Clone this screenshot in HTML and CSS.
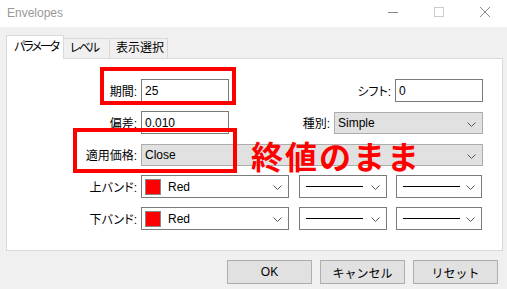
FILE: index.html
```html
<!DOCTYPE html>
<html lang="ja">
<head>
    <meta charset="UTF-8">
    <title>Envelopes</title>
    <link rel="stylesheet" href="styles.css">
</head>
<body>
    <div class="window">
        <div class="titlebar">
            <span class="title">Envelopes</span>
            <div class="controls">
                <svg class="ctl" width="46" height="27" viewBox="0 0 46 27"><line x1="18" y1="12.5" x2="28" y2="12.5" stroke="#888" stroke-width="1"/></svg>
                <svg class="ctl" width="46" height="27" viewBox="0 0 46 27"><rect x="18.5" y="7.5" width="9" height="9" fill="none" stroke="#ccc" stroke-width="1"/></svg>
                <svg class="ctl" width="46" height="27" viewBox="0 0 46 27"><path d="M18 7 L28 17 M28 7 L18 17" stroke="#888" stroke-width="1"/></svg>
            </div>
        </div>

        <div class="tabs">
            <div class="tab active kana">パラメータ</div>
            <div class="tab tab-level kana">レベル</div>
            <div class="tab tab-view">表示選択</div>
        </div>

        <div class="panel">
            <div class="row">
                <label class="lbl">期間:</label>
                <div class="input w88">25</div>
                <label class="lbl right-lbl-1">シフト:</label>
                <div class="input w88">0</div>
            </div>
            <div class="row">
                <label class="lbl">偏差:</label>
                <div class="input w88">0.010</div>
                <label class="lbl right-lbl-2">種別:</label>
                <div class="combo gray w149">Simple<svg class="chev" width="9" height="5" viewBox="0 0 9 5"><polyline points="0.5,0.5 4.5,4.5 8.5,0.5" fill="none" stroke="#555"/></svg></div>
            </div>
            <div class="row">
                <label class="lbl">適用価格:</label>
                <div class="combo gray w342">Close<svg class="chev" width="9" height="5" viewBox="0 0 9 5"><polyline points="0.5,0.5 4.5,4.5 8.5,0.5" fill="none" stroke="#555"/></svg></div>
            </div>
            <div class="row">
                <label class="lbl">上バンド:</label>
                <div class="combo w148"><span class="swatch"></span>Red<svg class="chev" width="9" height="5" viewBox="0 0 9 5"><polyline points="0.5,0.5 4.5,4.5 8.5,0.5" fill="none" stroke="#555"/></svg></div>
                <div class="combo w88 gap10"><span class="line"></span><svg class="chev" width="9" height="5" viewBox="0 0 9 5"><polyline points="0.5,0.5 4.5,4.5 8.5,0.5" fill="none" stroke="#555"/></svg></div>
                <div class="combo w86 gap9"><span class="line"></span><svg class="chev" width="9" height="5" viewBox="0 0 9 5"><polyline points="0.5,0.5 4.5,4.5 8.5,0.5" fill="none" stroke="#555"/></svg></div>
            </div>
            <div class="row">
                <label class="lbl">下バンド:</label>
                <div class="combo w148"><span class="swatch"></span>Red<svg class="chev" width="9" height="5" viewBox="0 0 9 5"><polyline points="0.5,0.5 4.5,4.5 8.5,0.5" fill="none" stroke="#555"/></svg></div>
                <div class="combo w88 gap10"><span class="line"></span><svg class="chev" width="9" height="5" viewBox="0 0 9 5"><polyline points="0.5,0.5 4.5,4.5 8.5,0.5" fill="none" stroke="#555"/></svg></div>
                <div class="combo w86 gap9"><span class="line"></span><svg class="chev" width="9" height="5" viewBox="0 0 9 5"><polyline points="0.5,0.5 4.5,4.5 8.5,0.5" fill="none" stroke="#555"/></svg></div>
            </div>
        </div>

        <div class="buttons">
            <button class="btn">OK</button>
            <button class="btn">キャンセル</button>
            <button class="btn">リセット</button>
        </div>

        <!-- annotations drawn over the dialog -->
        <div class="mark mark-period"></div>
        <div class="mark mark-price"></div>
        <div class="note">終値のまま</div>
    </div>
</body>
</html>
```

FILE: styles.css
```css
body {
    margin: 0;
    padding: 0;
    background-color: #f0f0f0;
    font-family: "Segoe UI", "Liberation Sans", "Noto Sans CJK JP", sans-serif;
    font-size: 12px;
    color: #000;
    font-feature-settings: "palt";
}
.window {
    position: relative;
    width: 507px;
    height: 289px;
    overflow: hidden;
    background-color: #f0f0f0;
}
.titlebar {
    height: 27px;
    background-color: #fff;
    display: flex;
    align-items: center;
    justify-content: space-between;
}
.title {
    margin-left: 7px;
    color: #999;
    font-size: 12px;
    margin-top: -2px;
}
.controls {
    display: flex;
    margin-right: -1px;
}
.ctl {
    display: block;
}

.tabs {
    display: flex;
    align-items: flex-end;
    margin: 8px 0 0 6px;
    height: 23px;
}
.tab {
    height: 20px;
    line-height: 18px;
    padding-left: 6px;
    border: 1px solid #d9d9d9;
    border-bottom: none;
    border-left: none;
    background-color: #f0f0f0;
    box-sizing: border-box;
    white-space: nowrap;
}
.tab.kana {
    letter-spacing: -2px;
}
.tab.active {
    width: 58px;
    height: 24px;
    line-height: 22px;
    background-color: #fff;
    border-left: 1px solid #d9d9d9;
    padding-left: 7px;
    margin-bottom: -1px;
    position: relative;
    z-index: 1;
}
.tab-level { width: 46px; }
.tab-view { width: 58px; }

.panel {
    margin-left: 6px;
    width: 497px;
    height: 193px;
    box-sizing: border-box;
    background-color: #fff;
    border: 1px solid #d9d9d9;
    padding-top: 20px;
    display: flex;
    flex-direction: column;
    gap: 9px;
}
.row {
    display: flex;
    align-items: center;
    height: 23px;
}
.lbl {
    width: 130px;
    margin-right: 4px;
    text-align: right;
    flex-shrink: 0;
}
.right-lbl-1 { width: 162px; }
.right-lbl-2 { width: 101px; }

.input, .combo {
    height: 23px;
    box-sizing: border-box;
    border: 1px solid #7a7a7a;
    background-color: #fff;
    display: flex;
    align-items: center;
    padding-left: 3px;
    flex-shrink: 0;
}
.combo {
    position: relative;
    padding-left: 3px;
}
.combo.gray {
    background-color: #e1e1e1;
    border-color: #adadad;
    height: 22px;
}
.chev {
    position: absolute;
    right: 6px;
    top: 9px;
}
.w88 { width: 88px; }
.w86 { width: 86px; }
.w148 { width: 148px; }
.w149 { width: 149px; }
.w342 { width: 342px; }
.gap10 { margin-left: 10px; }
.gap9 { margin-left: 9px; }

.swatch {
    width: 14px;
    height: 14px;
    background-color: #ff0000;
    border: 1px solid #888;
    margin-right: 7px;
}
.line {
    width: 57px;
    height: 1px;
    background-color: #000;
    margin-left: 3px;
}

.buttons {
    display: flex;
    justify-content: flex-end;
    gap: 8px;
    padding: 9px 9px 0 0;
}
.btn {
    width: 85px;
    height: 24px;
    margin: 0;
    background-color: #e1e1e1;
    border: 1px solid #adadad;
    font-family: inherit;
    font-size: 12px;
    color: #000;
    padding: 0;
}

.mark {
    position: absolute;
    border: 4px solid #ff0000;
    box-sizing: border-box;
}
.mark-period {
    left: 100px;
    top: 67px;
    width: 136px;
    height: 38px;
}
.mark-price {
    left: 73px;
    top: 128px;
    width: 164px;
    height: 45px;
}
.note {
    position: absolute;
    left: 251px;
    top: 137px;
    font-family: "Noto Sans CJK JP", sans-serif;
    font-feature-settings: normal;
    font-weight: bold;
    font-size: 32px;
    line-height: 36px;
    letter-spacing: 2px;
    color: #ff0000;
}
```
